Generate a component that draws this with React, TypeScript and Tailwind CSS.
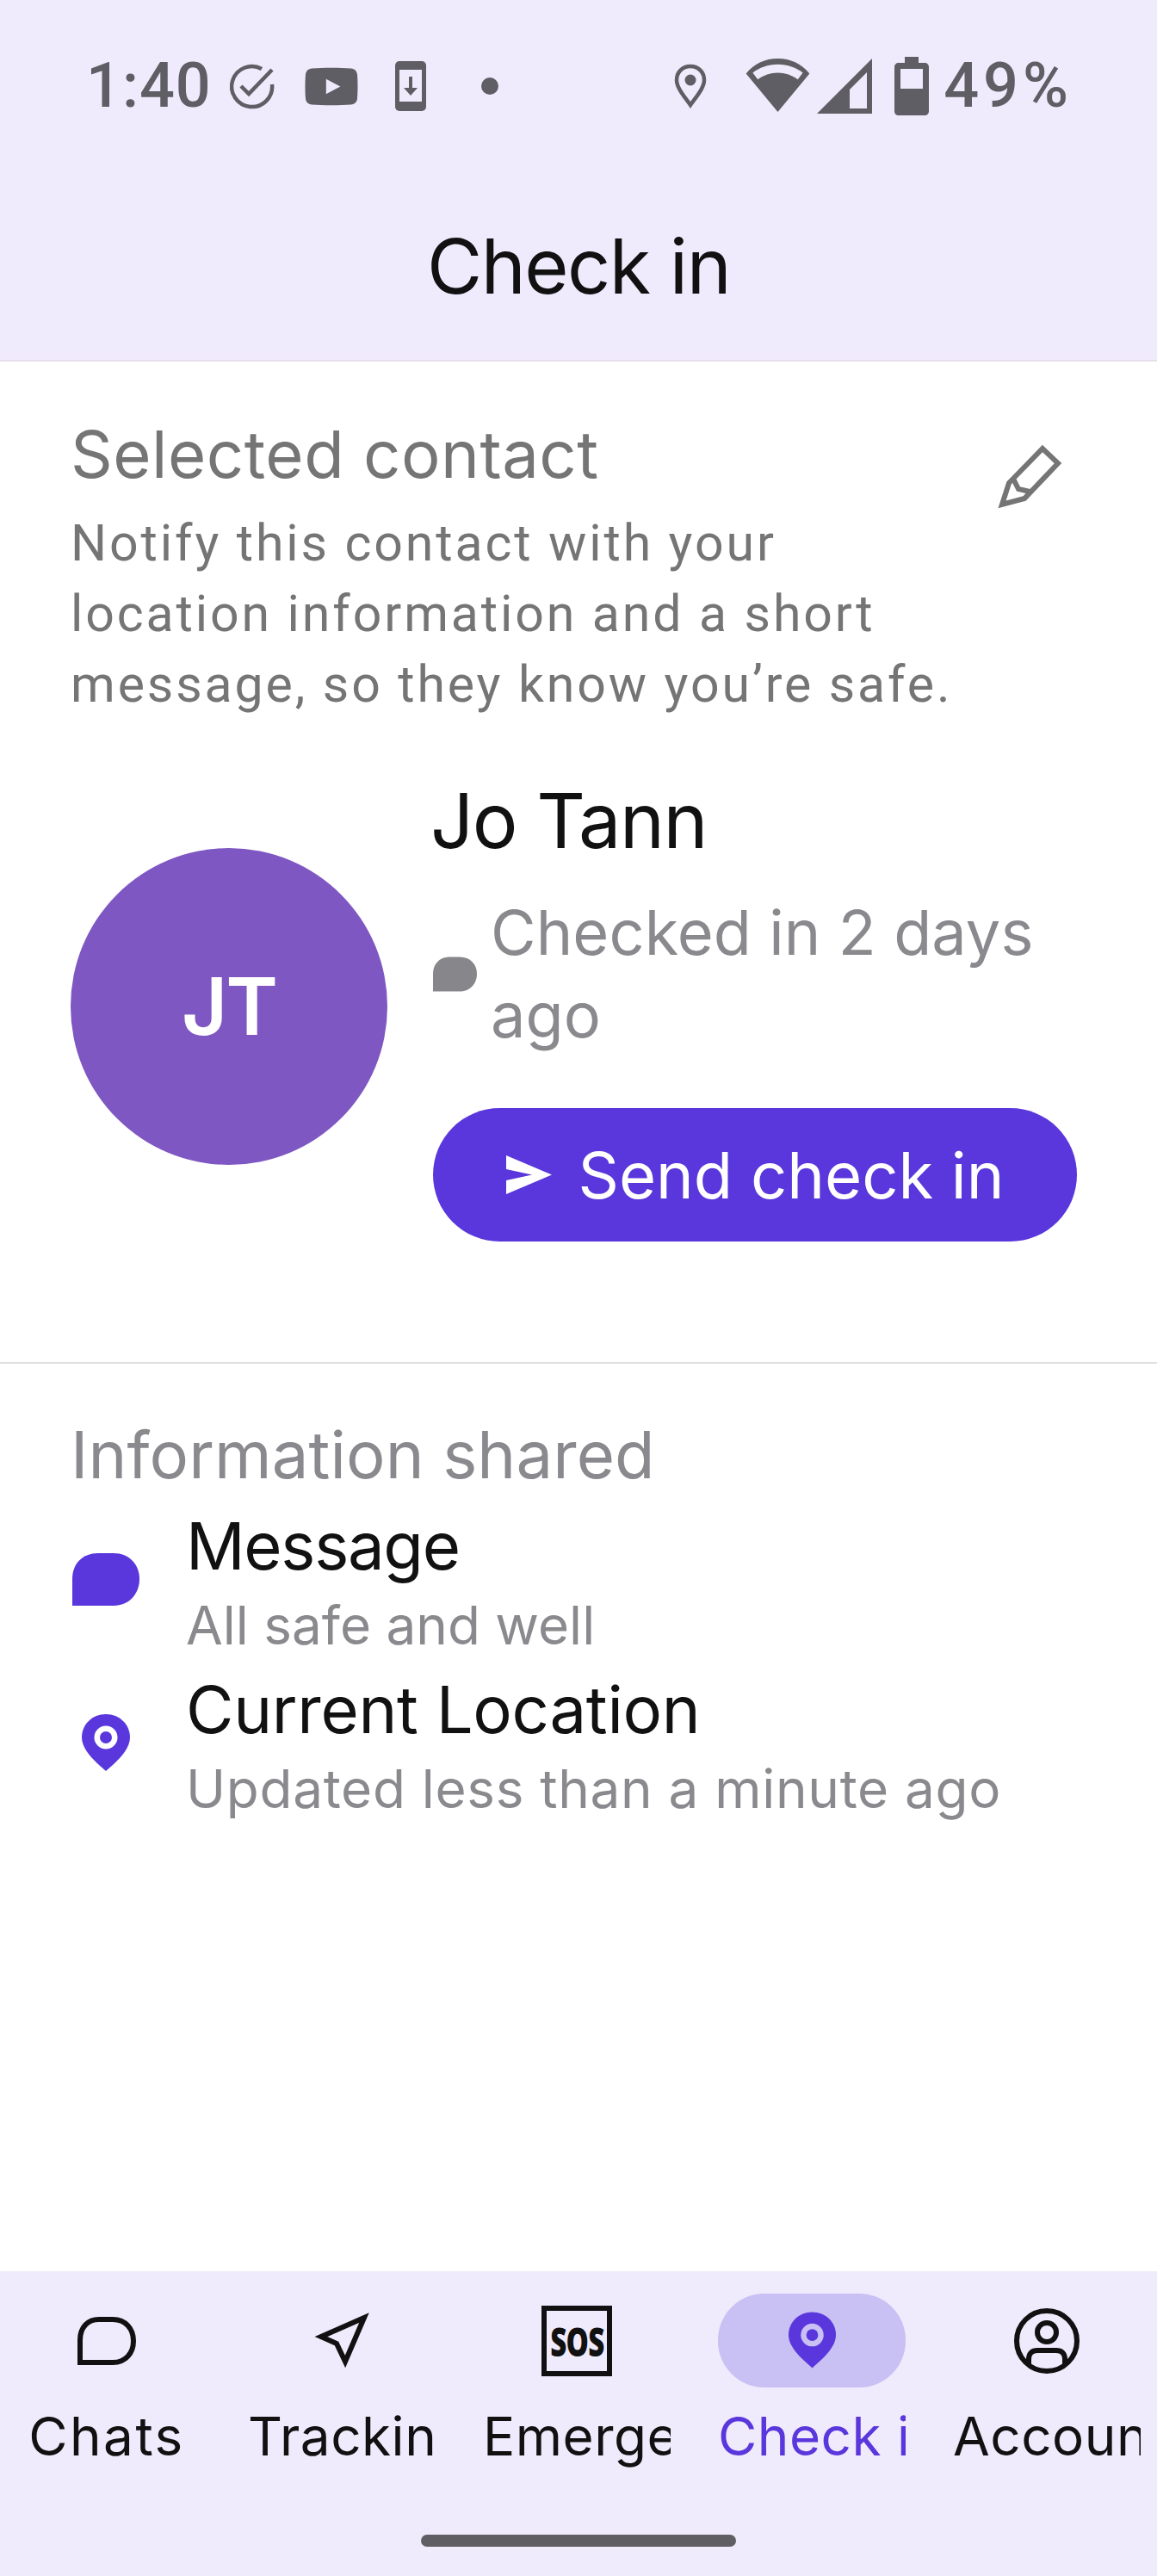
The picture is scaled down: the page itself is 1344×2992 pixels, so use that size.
import React from "react";

const Gray = "#5f5e64";

function StatusLeft() {
  return (
    <div className="flex items-center">
      <span className="text-[72px] leading-none text-[#5f5e64] font-['Roboto',sans-serif] font-medium tracking-[1px]">1:40</span>
      <svg width="52" height="53" viewBox="0 0 52 53" className="ml-[21px]" fill="none" stroke={Gray} strokeWidth="4.5">
        <path d="M37 6A23.500 23.500 0 1 0 49 24" />
        <path d="M13 26l9 9L49 7" />
      </svg>
      <svg width="62" height="45" viewBox="0 0 60 46" className="ml-[35px]" preserveAspectRatio="none">
        <path fill={Gray} d="M8 1.500C20 .5 40 .5 52 1.500c4 .3 6.500 3 7 7 .7 8 .7 21 0 29-.5 4-3 6.500-7 7-12 1-32 1-44 0-4-.5-6.500-3-7-7-.7-8-.7-21 0-29 .5-4 3-6.700 7-7z" />
        <path fill="#efeafc" d="M24 14v18l16-9z" />
      </svg>
      <svg width="36" height="58" viewBox="0 0 36 58" className="ml-[43px]">
        <rect width="36" height="58" rx="5" fill={Gray} />
        <rect x="5" y="10" width="26" height="37" fill="#efeafc" />
        <path fill={Gray} d="M16 18h4v13h6l-8 9-8-9h6z" />
      </svg>
      <span className="ml-[64px] w-[20px] h-[20px] rounded-full bg-[#5f5e64]" />
    </div>
  );
}

function StatusRight() {
  return (
    <div className="flex items-center">
      <svg width="38" height="53" viewBox="0 0 38 53" fill="none">
        <path d="M19 3C9.500 3 3 10 3 19c0 9 9 19 16 29 7-10 16-20 16-29C35 10 28.500 3 19 3z" stroke={Gray} strokeWidth="4.500" />
        <circle cx="19" cy="19" r="6.500" fill={Gray} />
      </svg>
      <svg width="77" height="64" viewBox="0 0 78 66" className="ml-[44px]">
        <path fill={Gray} fillRule="evenodd" d="M39 0c15 0 28 6 38 18L39 64 1 18C11 6 24 0 39 0zM39 7C27 7 17 11 9 17l6 8c7-5 15-8 24-8s17 3 24 8l6-8C61 11 51 7 39 7z" />
      </svg>
      <svg width="64" height="64" viewBox="0 0 64 64" className="ml-[7px]">
        <path fill={Gray} fillRule="evenodd" d="M64 0v64H0zM58 16 38 36v22h20z" />
      </svg>
      <svg width="40" height="68" viewBox="0 0 40 68" className="ml-[26px]">
        <path fill={Gray} fillRule="evenodd" d="M12 0h16v7h7c3 0 5 2 5 5v51c0 3-2 5-5 5H5c-3 0-5-2-5-5V12c0-3 2-5 5-5h7zM7 14v23h26V14z" />
      </svg>
      <span className="ml-[17px] text-[72px] leading-none text-[#5f5e64] font-['Roboto',sans-serif] font-medium tracking-[5px]">49%</span>
    </div>
  );
}

function Bubble({ className, fill }: { className?: string; fill: string }) {
  return (
    <svg viewBox="0 0 78 61" className={className}>
      <path fill={fill} d="M0 61V30C0 12 12 0 30 0h18c18 0 30 13 30 30S66 61 48 61z" />
    </svg>
  );
}

function PinFilled({ className, fill, hole }: { className?: string; fill: string; hole: string }) {
  return (
    <svg viewBox="0 0 56 66" className={className}>
      <path fill={fill} d="M28 0C12 0 0 12 0 27c0 14 14 27 28 39 14-12 28-25 28-39C56 12 44 0 28 0z" />
      <circle cx="28" cy="27" r="13.500" fill={hole} />
      <circle cx="28" cy="27" r="7" fill={fill} />
    </svg>
  );
}

function NavItem({ label, icon, active, wide }: { label: string; icon: React.ReactNode; active?: boolean; wide?: boolean }) {
  return (
    <div className="flex flex-col items-center w-[218px] shrink-0">
      <div className={`h-[109px] w-[218px] rounded-[54px] flex items-center justify-center ${active ? "bg-[#c9c0f4]" : ""}`}>{icon}</div>
      <div className={`mt-[19px] w-[218px] overflow-hidden text-center text-[62px] leading-[76px] whitespace-nowrap font-['Inter',sans-serif] font-normal ${wide ? "tracking-[2.5px]" : "tracking-[0.5px]"} ${active ? "text-[#5a37dc]" : "text-[#111111]"}`}>
        {label}
      </div>
    </div>
  );
}

export default function App() {
  return (
    <div className="w-[1344px] h-[2992px] bg-white flex flex-col overflow-hidden font-['Inter',sans-serif]">
      <header className="h-[420px] shrink-0 bg-[#efeafc] border-b-2 border-[#e7e0ec] flex flex-col">
        <div className="h-[200px] flex items-center justify-between pl-[100px] pr-[98px]">
          <StatusLeft />
          <StatusRight />
        </div>
        <h1 className="text-center text-[88px] leading-[110px] text-[#111111] tracking-[-1.500px] font-normal mt-[54px]">Check in</h1>
      </header>

      <section className="h-[1164px] shrink-0 border-b-2 border-[#e0e0e0] px-[82px] pt-[64px]">
        <div className="flex justify-between">
          <div className="w-[1040px]">
            <h2 className="text-[76px] leading-[86px] text-[#757575] font-normal tracking-[0.5px]">Selected contact</h2>
            <p className="mt-[20px] text-[59px] leading-[82px] text-[#757575] font-['Roboto',sans-serif] tracking-[2.900px]">
              Notify this contact with your
              <br />
              location information and a short
              <br />
              message, so they know you’re safe.
            </p>
          </div>
          <svg width="130" height="130" viewBox="0 0 130 130" className="mt-[6px] mr-[4px]" fill="none" stroke="#757575" strokeWidth="6">
            <path d="M36 96 44 71 83 31 101 48 62 89z" />
            <path d="M49 66 55 78 68 81" />
          </svg>
        </div>

        <div className="mt-[60px] flex items-center">
          <div className="w-[368px] h-[368px] shrink-0 rounded-full bg-[#7e57c2] flex items-center justify-center text-white text-[92px] font-semibold tracking-[-2px]">JT</div>
          <div className="ml-[53px] flex-1 mt-[2px]">
            <div className="-ml-[3px] text-[88px] leading-[110px] text-[#111111] tracking-[-1.500px]">Jo Tann</div>
            <div className="flex items-center mt-[27px]">
              <Bubble className="w-[51px] h-[41px] shrink-0" fill="#87868b" />
              <span className="ml-[16px] text-[72px] leading-[96px] text-[#8a898e] tracking-[0.1px]">
                Checked in 2 days
                <br />
                ago
              </span>
            </div>
            <div className="mt-[60px] w-[748px] h-[155px] rounded-[78px] bg-[#5a37dc] flex items-center justify-center text-white">
              <svg width="53" height="45" viewBox="0 0 53 45">
                <path fill="#fff" d="M0 0 53 22.500 0 45V29l30-6.500L0 16z" />
              </svg>
              <span className="ml-[31px] text-[74px] leading-none tracking-[0px]">Send check in</span>
            </div>
          </div>
        </div>
      </section>

      <section className="flex-1 px-[82px] pt-[62px]">
        <h2 className="text-[76px] leading-[86px] text-[#8a898e] font-normal tracking-[0.1px]">Information shared</h2>
        <div className="mt-[15px] flex items-center">
          <div className="w-[82px] shrink-0 flex justify-center mb-[14px]">
            <Bubble className="w-[78px] h-[61px]" fill="#5a37dc" />
          </div>
          <div className="ml-[52px]">
            <div className="text-[76px] leading-[96px] text-[#111111] tracking-[-1.300px]">Message</div>
            <div className="text-[62px] leading-[94px] -mt-[2px] text-[#8a898e] tracking-[0px]">All safe and well</div>
          </div>
        </div>
        <div className="mt-[2px] flex items-center">
          <div className="w-[82px] shrink-0 flex justify-center mb-[14px]">
            <PinFilled className="w-[56px] h-[66px]" fill="#5a37dc" hole="#ffffff" />
          </div>
          <div className="ml-[52px]">
            <div className="text-[76px] leading-[96px] text-[#111111] tracking-[-0.300px]">Current Location</div>
            <div className="text-[62px] leading-[94px] -mt-[2px] text-[#8a898e] tracking-[0.700px]">Updated less than a minute ago</div>
          </div>
        </div>
      </section>

      <nav className="h-[354px] shrink-0 bg-[#efeafc] flex flex-col">
        <div className="flex gap-[55px] pt-[26px] pl-[15px] h-[306px]">
          <NavItem wide label="Chats" icon={
            <svg width="68" height="56" viewBox="0 0 68 56" fill="none" stroke="#111111" strokeWidth="6"><path d="M3 53V27C3 12 12 3 25 3h16c15 0 24 11 24 25S56 53 41 53z" /></svg>
          } />
          <NavItem label="Tracking" icon={
            <svg width="64" height="65" viewBox="0 0 64 65" fill="none" stroke="#111111" strokeWidth="6"><path d="M58 6 8 28 26 36 36 57z" /></svg>
          } />
          <NavItem label="Emergency" icon={
            <div className="w-[82px] h-[82px] border-[6px] border-[#111111] flex items-center justify-center text-[#111111]">
              <span className="text-[46px] leading-none font-extrabold tracking-[-1px] font-['Open_Sans',sans-serif] scale-x-[0.72]">SOS</span>
            </div>
          } />
          <NavItem active label="Check in" icon={
            <PinFilled className="w-[55px] h-[66px] -mt-[2px]" fill="#5a37dc" hole="#c9c0f4" />
          } />
          <NavItem label="Account" icon={
            <svg width="76" height="76" viewBox="0 0 76 76" fill="none" stroke="#111111" strokeWidth="6"><circle cx="38" cy="38" r="35" /><circle cx="38" cy="28" r="11" /><path d="M17 66V59C17 52 21 49 27 49H49C55 49 59 52 59 59V66" /></svg>
          } />
        </div>
        <div className="mx-auto w-[366px] h-[14px] rounded-full bg-[#5f5e64]" />
      </nav>
    </div>
  );
}
